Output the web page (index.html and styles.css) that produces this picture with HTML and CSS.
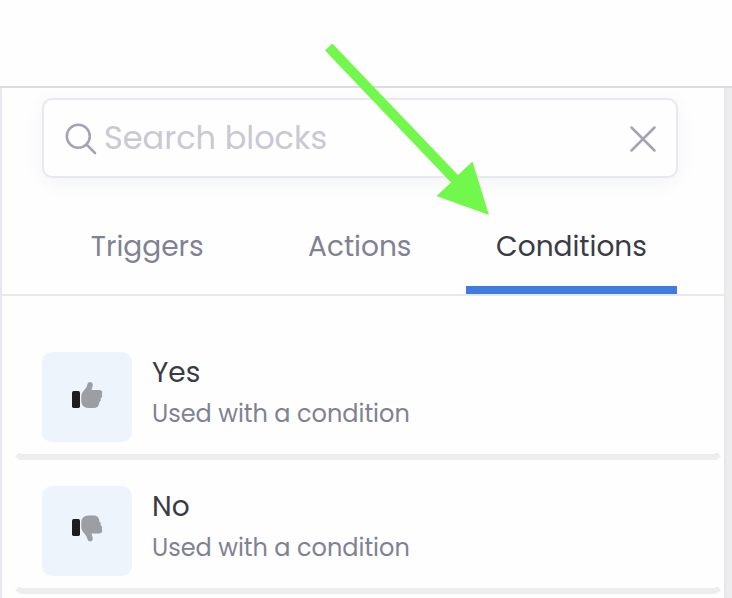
FILE: index.html
```html
<!DOCTYPE html>
<html lang="en">
<head>
<meta charset="utf-8">
<title>Blocks</title>
<link rel="stylesheet" href="styles.css">
</head>
<body>
<header class="topbar"></header>
<main class="workspace">
  <section class="panel">
    <div class="search">
      <svg class="search-icon" width="32" height="32" viewBox="0 0 32 32"><circle cx="13.3" cy="13.3" r="11.5"/><path d="M21.5 21.5 30 30"/></svg>
      <span class="placeholder">Search blocks</span>
      <svg class="close-icon" width="28" height="28" viewBox="0 0 28 28"><path d="M2.5 2.5 25.5 25.5M25.5 2.5 2.5 25.5"/></svg>
    </div>
    <nav class="tabs">
      <div class="tab">Triggers</div>
      <div class="tab">Actions</div>
      <div class="tab active">Conditions</div>
    </nav>
    <div class="list">
      <article class="block">
        <div class="tile"><svg width="32" height="28" viewBox="0 0 32 28"><rect class="cuff" x="1" y="10" width="8" height="17" rx="1.7"/><path class="hand" d="M10.3 16C10.3 11 13.5 9.5 15.4 6.2L16.6 3C17.3 .2 21.8 .3 21.8 4C21.8 5.8 20.6 7.2 20.6 9H28C30.8 9 32 11.2 30.8 13.4C31.6 14.8 31 16.6 29.6 17.2C30.2 18.8 29.6 20.4 28.2 21C28.4 24.8 26.2 27 23 27H17.5C13 27 10.3 24 10.3 20Z"/></svg></div>
        <div class="copy"><h2>Yes</h2><p>Used with a condition</p></div>
      </article>
      <svg class="divider" width="706" height="8" viewBox="0 0 706 8"><path d="M0 4.5 4 1H6V2H700V1H703L706 4.5 701 8H5Z"/></svg>
      <article class="block">
        <div class="tile"><svg width="32" height="28" viewBox="0 0 32 28"><rect class="cuff" x="1" y="4" width="8" height="17" rx="1.7"/><path class="hand" transform="matrix(1 0 0 -1 0 27.5)" d="M10.3 16C10.3 11 13.5 9.5 15.4 6.2L16.6 3C17.3 .2 21.8 .3 21.8 4C21.8 5.8 20.6 7.2 20.6 9H28C30.8 9 32 11.2 30.8 13.4C31.6 14.8 31 16.6 29.6 17.2C30.2 18.8 29.6 20.4 28.2 21C28.4 24.8 26.2 27 23 27H17.5C13 27 10.3 24 10.3 20Z"/></svg></div>
        <div class="copy"><h2>No</h2><p>Used with a condition</p></div>
      </article>
      <svg class="divider" width="706" height="8" viewBox="0 0 706 8"><path d="M0 4.5 4 1H6V2H700V1H703L706 4.5 701 8H5Z"/></svg>
    </div>
  </section>
</main>
<svg class="pointer" width="732" height="598" viewBox="0 0 732 598"><path d="M332.3 43.5 458 175 472.5 161.5 489 215 436.5 196 451 182.5 325 50.5Z"/></svg>
</body>
</html>
```

FILE: styles.css
```css
* { box-sizing: border-box; }
body {
  margin: 0;
  height: 598px;
  overflow: hidden;
  display: flex;
  flex-direction: column;
  position: relative;
  background: #fefefe;
  font-family: Poppins, Inter, sans-serif;
  color: #393c44;
}
svg { display: block; flex: none; }
.topbar { height: 88px; flex: none; border-bottom: 2px solid #dcdcde; }
.workspace { flex: 1; min-height: 0; background: #ededed; }
.panel {
  width: 726px;
  height: 510px;
  overflow: hidden;
  background: #fefefe;
  border: solid #e8e7ef;
  border-width: 0 2px;
}
.search {
  display: flex;
  align-items: center;
  width: 636px;
  height: 80px;
  margin: 10px 0 0 40px;
  padding: 0 20px 0 21px;
  border: 2px solid #e8e8ef;
  border-radius: 10px;
  background: #fefefe;
  box-shadow: 0 4px 20px rgba(22, 33, 74, 0.05);
}
.search-icon, .close-icon { fill: none; stroke: #a4a2b5; stroke-width: 2.5; stroke-linecap: round; }
.search-icon { margin-top: 2px; }
.close-icon { margin: 2px -1px 0 auto; }
.placeholder { margin-left: 7px; font-size: 32px; line-height: 48px; color: #cac8d5; white-space: nowrap; }
.tabs { display: flex; height: 118px; padding: 0 47px 0 39px; border-bottom: 2px solid #e8e8ee; }
.tab {
  flex: 1;
  display: flex;
  justify-content: center;
  padding-top: 48px;
  font-size: 28px;
  line-height: 42px;
  color: #808292;
  border-bottom: 8px solid transparent;
}
.tab.active { flex: none; width: 211px; color: #393c44; border-color: #3f7be0; }
.list { padding-top: 56px; }
.block { display: flex; gap: 20px; height: 90px; margin-left: 40px; }
.tile {
  display: flex;
  align-items: center;
  justify-content: center;
  width: 90px;
  height: 90px;
  flex: none;
  padding-bottom: 4px;
  border-radius: 10px;
  background: #edf4fc;
}
.cuff { fill: #1d1d1d; }
.hand { fill: #9b9ea2; }
h2, p { margin: 0; font-weight: 400; white-space: nowrap; }
h2 { font-size: 28px; line-height: 42px; }
p { font-size: 24px; line-height: 36px; margin-top: 2px; color: #808292; }
.divider { margin: 10px 0 26px 13px; fill: #ededed; }
.pointer { position: absolute; top: 0; left: 0; fill: #72f74c; pointer-events: none; }
```
